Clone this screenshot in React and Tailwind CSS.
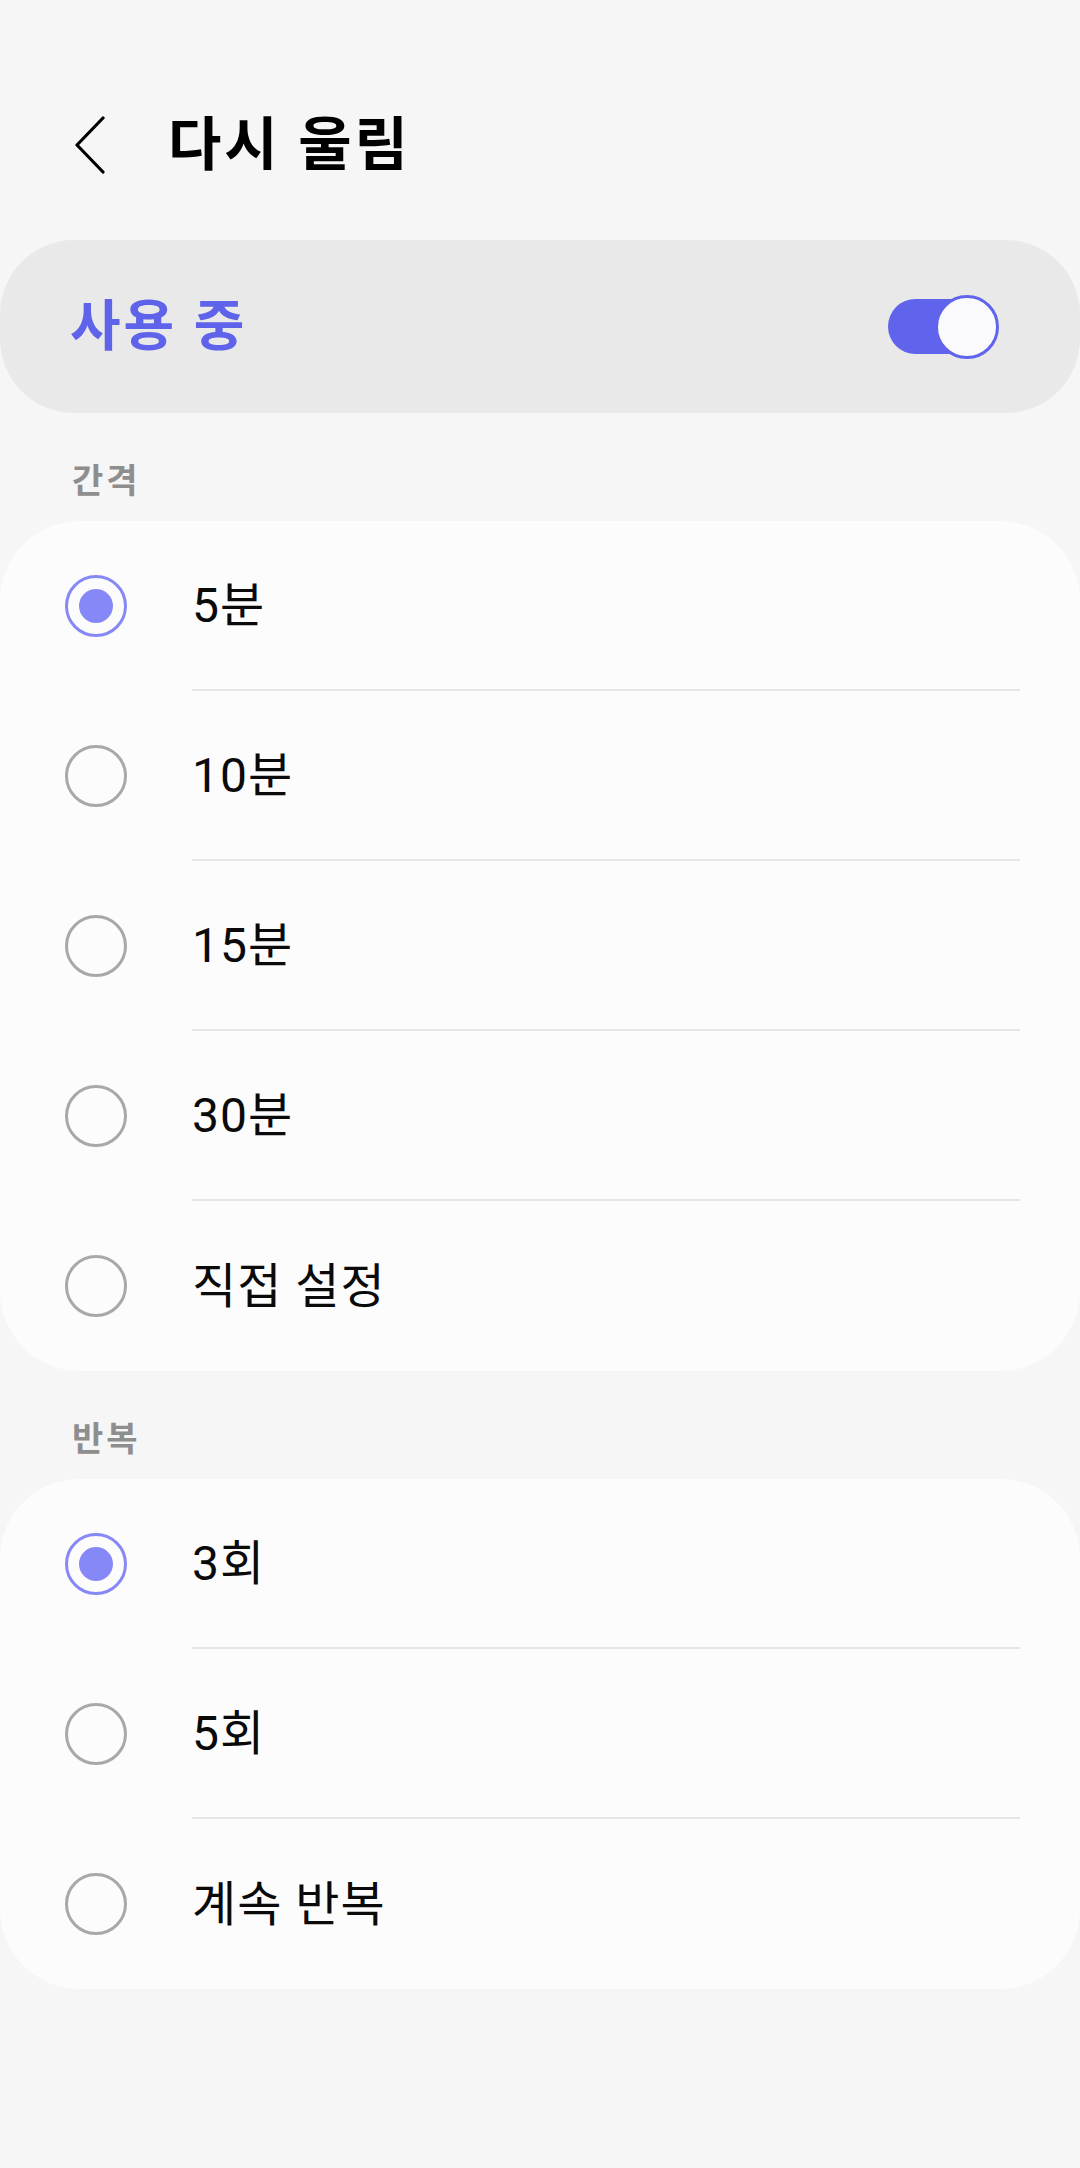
import React from "react";

const FONT = { fontFamily: 'Roboto, "Noto Sans CJK KR", sans-serif' };

function Radio({ checked }) {
  if (checked) {
    return (
      <div className="w-[62px] h-[62px] rounded-full border-[3px] border-[#8688f6] flex items-center justify-center">
        <div className="w-[34px] h-[34px] rounded-full bg-[#8688f8]" />
      </div>
    );
  }
  return <div className="w-[62px] h-[62px] rounded-full border-[3px] border-[#a8a8a8]" />;
}

function Row({ label, checked, last }) {
  return (
    <div className="flex h-[170px] items-stretch">
      <div className="w-[192px] flex items-center pl-[65px]">
        <Radio checked={checked} />
      </div>
      <div
        className={
          "flex-1 mr-[60px] flex items-center text-[48px] tracking-[1px] text-[#0a0a0a] " +
          (last ? "" : "border-b-2 border-[#e6e6e6]")
        }
      >
        <span className="leading-none pt-[2px]">{label}</span>
      </div>
    </div>
  );
}

function SectionLabel({ children }) {
  return (
    <div className="h-[108px] flex items-end pb-[20px] pl-[72px]">
      <span className="text-[34px] leading-[40px] font-bold tracking-[3px] text-[#8e8e8e]">{children}</span>
    </div>
  );
}

export default function App() {
  const interval = ["5분", "10분", "15분", "30분", "직접 설정"];
  const repeat = ["3회", "5회", "계속 반복"];
  return (
    <div className="w-[1080px] h-[2168px] bg-[#f6f6f6]" style={FONT}>
      <div className="h-[240px] pt-[50px] flex items-center">
        <div className="pl-[75px] w-[168px]">
          <svg width="32" height="60" viewBox="0 0 32 60" fill="none">
            <path d="M28 3 L2 30 L28 57" stroke="#000" strokeWidth="3.2" strokeLinecap="round" strokeLinejoin="round" />
          </svg>
        </div>
        <span className="text-[58px] font-bold tracking-[3px] text-black leading-none">다시 울림</span>
      </div>

      <div className="h-[173px] bg-[#e9e9e9] rounded-[74px] flex items-center justify-between pl-[70px] pr-[81px]">
        <span className="text-[55px] font-bold tracking-[3px] text-[#5f63e9] leading-none">사용 중</span>
        <div className="relative w-[111px] h-[64px]">
          <div className="absolute left-0 top-[4px] w-[100px] h-[55px] rounded-full bg-[#6064ec]" />
          <div className="absolute right-0 top-0 w-[64px] h-[64px] rounded-full bg-[#fafafc] border-[3px] border-[#6064ec]" />
        </div>
      </div>

      <SectionLabel>간격</SectionLabel>
      <div className="bg-[#fcfcfc] rounded-[80px]">
        {interval.map((l, i) => (
          <Row key={l} label={l} checked={i === 0} last={i === interval.length - 1} />
        ))}
      </div>

      <SectionLabel>반복</SectionLabel>
      <div className="bg-[#fcfcfc] rounded-[80px]">
        {repeat.map((l, i) => (
          <Row key={l} label={l} checked={i === 0} last={i === repeat.length - 1} />
        ))}
      </div>
    </div>
  );
}
